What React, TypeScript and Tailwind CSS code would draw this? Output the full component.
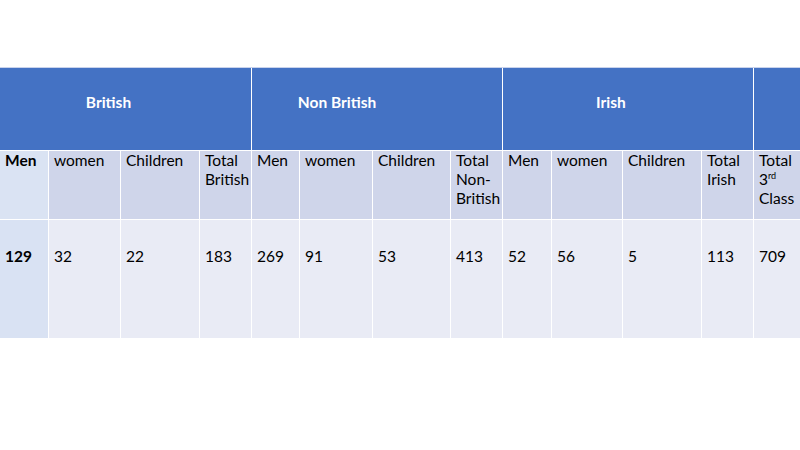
import React from "react";

const sub = ["Men", "women", "Children"];

export default function App() {
  const cellB = "bg-[#cfd5ea] px-[5px] pt-0 text-[15.5px] leading-[19px] text-black";
  const cellC = "bg-[#e9ebf5] px-[5px] pt-[27px] text-[15.5px] leading-[19px] text-black";
  return (
    <div className="w-[800px] h-[450px] bg-white" style={{ fontFamily: "Lato, 'Open Sans', sans-serif" }}>
      <div className="h-[67px]" />
      <div className="grid grid-cols-[48px_71px_78px_51px_47px_72px_77px_51px_48px_70px_78px_51px_1fr] grid-rows-[82px_68px_118px] gap-px bg-white border-t border-[#c9d3ec]">
        <div className="col-span-4 bg-[#4472c4] flex items-center justify-center pr-[34px] pb-[13px] text-white font-bold text-[15.5px]">British</div>
        <div className="col-span-4 bg-[#4472c4] flex items-center justify-center pr-[80px] pb-[13px] text-white font-bold text-[15.5px]">Non British</div>
        <div className="col-span-4 bg-[#4472c4] flex items-center justify-center pr-[34px] pb-[13px] text-white font-bold text-[15.5px]">Irish</div>
        <div className="bg-[#4472c4]" />

        <div className="bg-[#dae3f3] px-[5px] pt-0 text-[15.5px] leading-[19px] font-bold text-black">Men</div>
        <div className={cellB}>women</div>
        <div className={cellB}>Children</div>
        <div className={cellB}>Total British</div>
        {sub.map((s) => (
          <div key={"n" + s} className={cellB}>{s}</div>
        ))}
        <div className={cellB}>Total Non-British</div>
        {sub.map((s) => (
          <div key={"i" + s} className={cellB}>{s}</div>
        ))}
        <div className={cellB}>Total Irish</div>
        <div className={cellB}>
          <div>Total</div>
          <div>
            3<span className="relative -top-[6px] text-[9px] leading-none">rd</span>
          </div>
          <div>Class</div>
        </div>

        <div className="bg-[#d9e2f3] px-[5px] pt-[27px] text-[15.5px] leading-[19px] font-bold text-black">129</div>
        {["32", "22", "183", "269", "91", "53", "413", "52", "56", "5", "113", "709"].map((v, i) => (
          <div key={i} className={cellC}>{v}</div>
        ))}
      </div>
    </div>
  );
}
